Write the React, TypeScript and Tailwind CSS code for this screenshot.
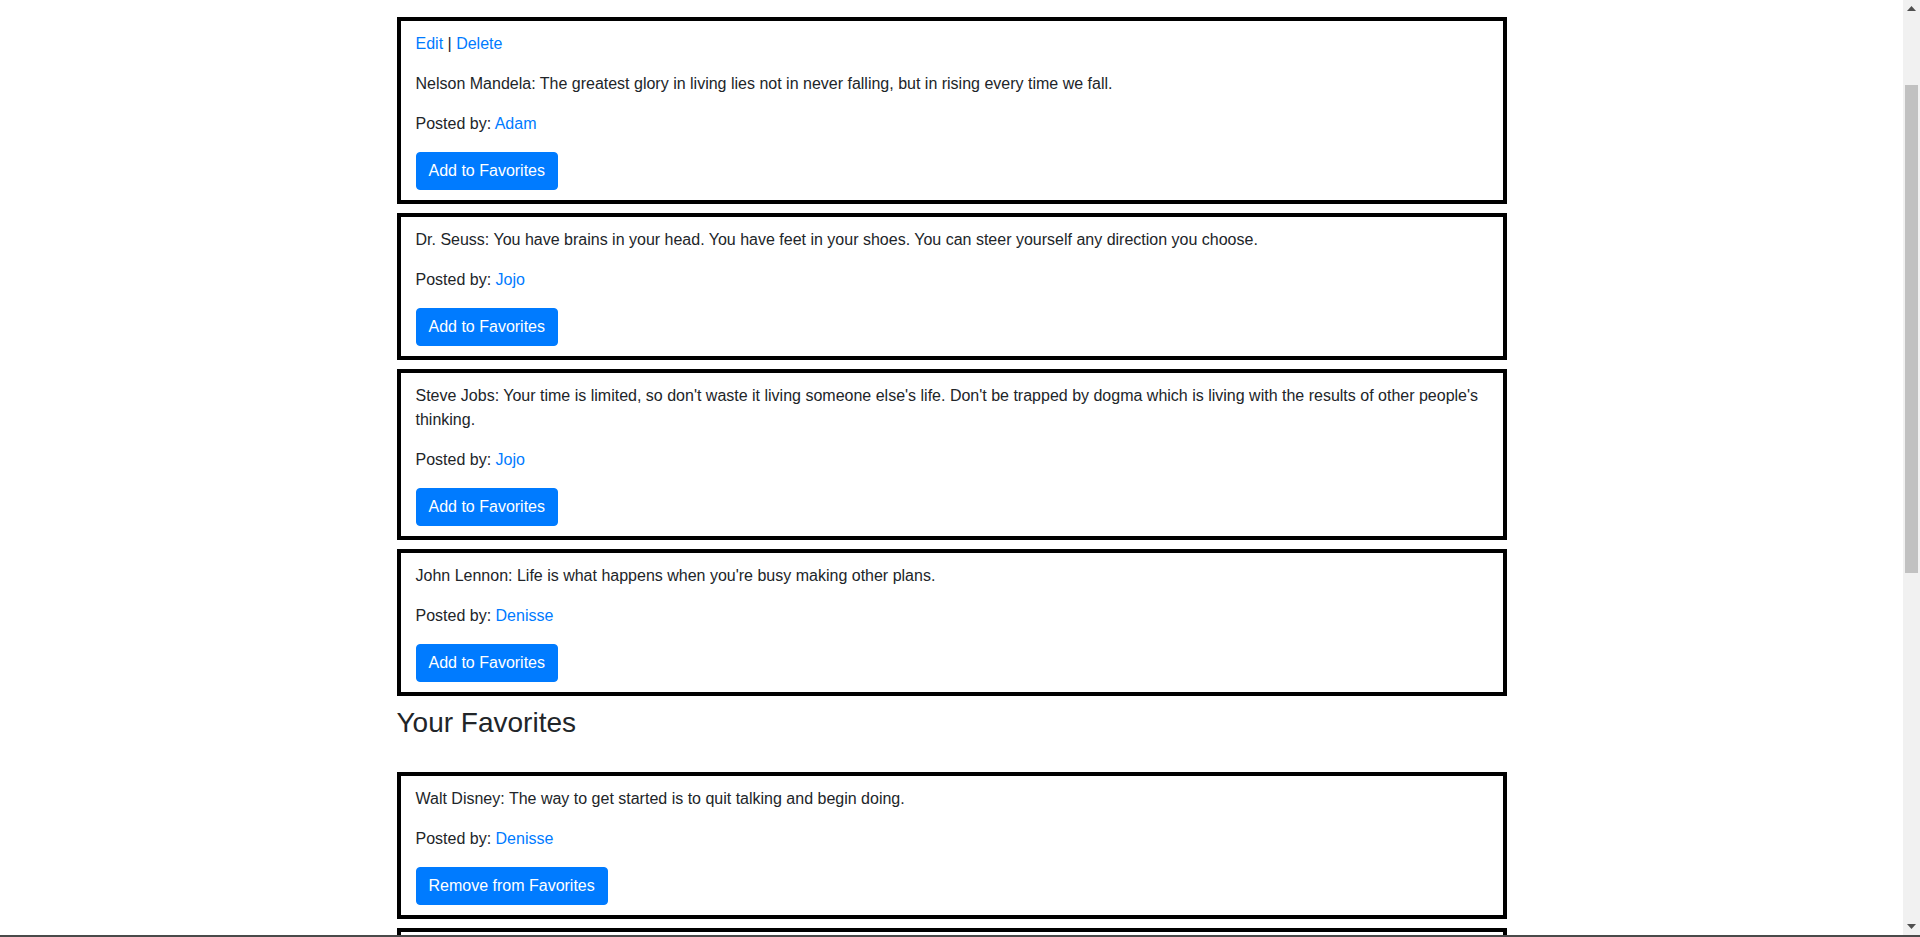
import React from "react";

type Quote = {
  id: number;
  author: string;
  text: string;
  postedBy: string;
  mine?: boolean;
};

const quotes: Quote[] = [
  {
    id: 1,
    author: "Nelson Mandela",
    text: "The greatest glory in living lies not in never falling, but in rising every time we fall.",
    postedBy: "Adam",
    mine: true,
  },
  {
    id: 2,
    author: "Dr. Seuss",
    text: "You have brains in your head. You have feet in your shoes. You can steer yourself any direction you choose.",
    postedBy: "Jojo",
  },
  {
    id: 3,
    author: "Steve Jobs",
    text: "Your time is limited, so don't waste it living someone else's life. Don't be trapped by dogma which is living with the results of other people's thinking.",
    postedBy: "Jojo",
  },
  {
    id: 4,
    author: "John Lennon",
    text: "Life is what happens when you're busy making other plans.",
    postedBy: "Denisse",
  },
];

const favorites: Quote[] = [
  {
    id: 5,
    author: "Walt Disney",
    text: "The way to get started is to quit talking and begin doing.",
    postedBy: "Denisse",
  },
  {
    id: 6,
    author: "Eleanor Roosevelt",
    text: "The future belongs to those who believe in the beauty of their dreams.",
    postedBy: "Adam",
  },
];

function QuoteCard({ quote, favorite }: { quote: Quote; favorite?: boolean }) {
  return (
    <div className="border-4 border-black px-[15px] pt-[11px] pb-[10px] mb-[9px]">
      {/* owner actions */}
      {quote.mine && (
        <p className="mb-4">
          <a href="#" className="text-[#007bff]">Edit</a> |{" "}
          <a href="#" className="text-[#007bff]">Delete</a>
        </p>
      )}
      <p className="mb-4">
        {quote.author}: {quote.text}
      </p>
      <p className="mb-4">
        Posted by: <a href="#" className="text-[#007bff]">{quote.postedBy}</a>
      </p>
      <button className="h-[38px] px-[12px] rounded-[4px] border border-[#007bff] bg-[#007bff] text-white text-base leading-6">
        {favorite ? "Remove from Favorites" : "Add to Favorites"}
      </button>
    </div>
  );
}

function Arrow({ up }: { up?: boolean }) {
  return (
    <svg width="9" height="5" viewBox="0 0 9 5">
      <polygon points={up ? "0,5 4.5,0 9,5" : "0,0 4.5,5 9,0"} fill="#505050" />
    </svg>
  );
}

export default function App() {
  return (
    <div className="h-[937px] overflow-hidden flex flex-col bg-white font-['Liberation_Sans',Arial,sans-serif] text-base leading-6 text-[#212529]">
      <div className="flex flex-1 min-h-0">
        {/* Page */}
        <div className="flex-1 overflow-hidden">
          <div className="max-w-[1140px] mx-auto px-[15px] pt-[17px]">
            {quotes.map((q) => (
              <QuoteCard key={q.id} quote={q} />
            ))}

            <h3 className="text-[28px] leading-[1.2] font-medium mt-[10px] mb-[32px]">Your Favorites</h3>

            {favorites.map((q) => (
              <QuoteCard key={q.id} quote={q} favorite />
            ))}
          </div>
        </div>

        {/* Scrollbar */}
        <div className="w-[17px] bg-[#f1f1f1] flex flex-col items-center">
          <div className="h-[17px] flex items-center justify-center">
            <Arrow up />
          </div>
          <div className="w-[13px] h-[488px] mt-[68px] bg-[#c1c1c1]" />
          <div className="flex-1" />
          <div className="h-[17px] flex items-center justify-center">
            <Arrow />
          </div>
        </div>
      </div>
      <div className="h-[2px] bg-[#4a4a4a]" />
    </div>
  );
}
